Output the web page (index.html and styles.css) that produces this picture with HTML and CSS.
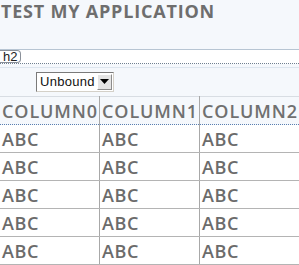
FILE: index.html
```html
<!doctype html>
<html lang="en">
  <head>
    <meta charset="UTF-8" />
    <title>Test My Application</title>
    <link rel="stylesheet" href="styles.css">
  </head>
  <body>
    <h1 class="title">TEST MY APPLICATION</h1>

    <div class="design-bar">
      <span class="tag">h2</span>
    </div>

    <div class="binding">
      <div class="combo">
        <span class="combo-text">Unbound</span>
        <span class="combo-arrow">
          <svg width="9" height="5" viewBox="0 0 9 5"><path d="M0 0h9L4.5 5z" fill="#000"/></svg>
        </span>
      </div>
    </div>

    <table class="grid">
      <thead>
        <tr><th>COLUMN0</th><th>COLUMN1</th><th>COLUMN2</th></tr>
      </thead>
      <tbody>
        <tr><td>ABC</td><td>ABC</td><td>ABC</td></tr>
        <tr><td>ABC</td><td>ABC</td><td>ABC</td></tr>
        <tr><td>ABC</td><td>ABC</td><td>ABC</td></tr>
        <tr><td>ABC</td><td>ABC</td><td>ABC</td></tr>
        <tr><td>ABC</td><td>ABC</td><td>ABC</td></tr>
      </tbody>
    </table>
  </body>
</html>
```

FILE: styles.css
```css
body {
  margin: 0;
  background: #f5f8fc;
  font-family: 'Open Sans', sans-serif;
  color: #6b6b6b;
  overflow: hidden;
}

.title {
  margin: 0;
  padding: 0 0 0 1px;
  height: 49px;
  font-size: 18px;
  line-height: 23px;
  font-weight: 700;
  letter-spacing: 0.8px;
  color: #6e6e6e;
}

.design-bar {
  background: #fff;
  border-top: 1px solid #b7c5d3;
  border-bottom: 1px dotted #6f7f90;
  height: 13px;
  margin-bottom: 3px;
}

.tag {
  display: inline-block;
  height: 11px;
  padding: 0 3px 0 3px;
  border: 1px solid #8a9099;
  border-left: none;
  border-radius: 0 4px 4px 0;
  font-family: 'Liberation Sans', sans-serif;
  font-size: 13px;
  line-height: 11px;
  color: #222;
  background: #fff;
  vertical-align: top;
}

.binding {
  border-top: 1px solid #dde5ee;
  height: 27px;
  padding: 1px 0 0 36px;
}

.combo {
  display: inline-flex;
  align-items: center;
  width: 76px;
  height: 18px;
  border: 1px solid;
  border-color: #7a7a7a #d4d0c8 #d4d0c8 #7a7a7a;
  background: #fff;
}

.combo-text {
  flex: 1;
  padding-left: 3px;
  font-family: 'Liberation Sans', sans-serif;
  font-size: 13px;
  letter-spacing: 0.3px;
  color: #111;
}

.combo-arrow {
  display: flex;
  align-items: center;
  justify-content: center;
  width: 15px;
  height: 16px;
  margin-right: 1px;
  background: #e4e4e4;
  border: 1px solid;
  border-color: #fff #8c8c8c #8c8c8c #fff;
  box-sizing: border-box;
}

.grid {
  border-collapse: collapse;
  width: 297px;
  table-layout: fixed;
}

.grid th,
.grid td {
  width: 97px;
  padding: 0 0 0 2px;
  text-align: left;
  font-size: 18px;
  font-weight: 600;
  letter-spacing: 0.6px;
  color: #6b6b6b;
  border-right: 1px solid #a8a8a8;
  white-space: nowrap;
  overflow: hidden;
}

.grid th {
  height: 27px;
  letter-spacing: 0.9px;
  background: #f5f8fc;
  border-top: 1px solid #d8dde3;
  border-bottom: 1px dotted #5a7fb0;
  color: #707070;
}

.grid td {
  height: 27px;
  background: #fff;
  border-bottom: 1px solid #b4b4b4;
}

.grid td:last-child {
  border-right: 2px solid #222;
}
```
